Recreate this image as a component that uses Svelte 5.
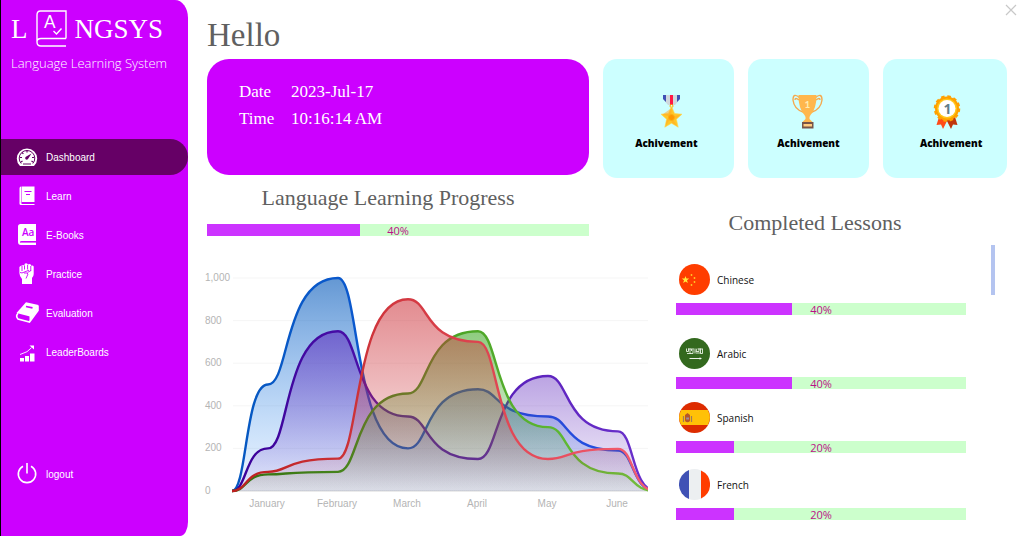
<script>
  const nav = [
    { label: 'Dashboard', icon: 'gauge' },
    { label: 'Learn', icon: 'learn' },
    { label: 'E-Books', icon: 'ebook' },
    { label: 'Practice', icon: 'fist' },
    { label: 'Evaluation', icon: 'book' },
    { label: 'LeaderBoards', icon: 'bars' }
  ];
  let active = $state('Dashboard');

  const awards = ['star', 'trophy', 'rosette'];

  const lessons = [
    { name: 'Chinese', flag: 'cn', value: 40 },
    { name: 'Arabic', flag: 'sa', value: 40 },
    { name: 'Spanish', flag: 'es', value: 20 },
    { name: 'French', flag: 'fr', value: 20 }
  ];

  const months = ['January', 'February', 'March', 'April', 'May', 'June'];
  const ticks = [0, 200, 400, 600, 800, 1000];
  const xs = [25, 61, 131, 201, 271, 341, 411, 449];
  const base = 225;
  const yOf = (v) => base - v * 0.213;

  const series = [
    { id: 'blue', values: [0, 500, 1000, 200, 478, 350, 190, 0], from: '#0558c0', to: '#1858ee', fill: '#0558b8' },
    { id: 'violet', values: [0, 200, 750, 350, 150, 540, 280, 0], from: '#3a0098', to: '#6a30cc', fill: '#5c24bc' },
    { id: 'green', values: [0, 78, 90, 458, 750, 300, 82, 0], from: '#24780c', to: '#6cc83c', fill: '#36a41c' },
    { id: 'red', values: [0, 90, 152, 900, 700, 150, 198, 0], from: '#bc2020', to: '#f45c70', fill: '#cc3038' }
  ];

  function curve(values) {
    let d = `M${xs[0]} ${yOf(values[0])}`;
    for (let i = 1; i < xs.length; i++) {
      const edge = i === 1 || i === xs.length - 1;
      const ease = edge ? [0.42, 0.36] : [0.31, 0.22];
      const dx = xs[i] - xs[i - 1];
      const y0 = yOf(values[i - 1]);
      const y1 = yOf(values[i]);
      d += `C${xs[i - 1] + dx * ease[0]} ${y0} ${xs[i - 1] + dx * ease[1]} ${y1} ${xs[i]} ${y1}`;
    }
    return d;
  }
</script>

{#snippet progress(value, label)}
  <div class="progress" role="progressbar" aria-label={label} aria-valuenow={value} aria-valuemin="0" aria-valuemax="100">
    <div class="bar" style="width: {value}%"></div>
    <span>{value}%</span>
  </div>
{/snippet}

<div class="app">
  <aside>
    <div class="logo">
      <span>L</span>
      <svg width="31" height="37" viewBox="0 0 31 37" fill="none" stroke="#fff" stroke-width="1.4">
        <path d="M30 28.500V1H4.500Q1 1 1 5V32Q1 36 5 36H30M1 32Q1 28.500 5 28.500H30" />
        <text x="8" y="18" fill="#fff" stroke="none" font-size="17" font-family="Lato">A</text>
        <path d="M17.500 21l3 3 5-5.500" />
      </svg>
      <span>NGSYS</span>
    </div>
    <p class="tagline">Language Learning System</p>

    <nav>
      {#each nav as item}
        <button class:active={active === item.label} onclick={() => (active = item.label)}>
          <svg width="24" height="24" viewBox="0 0 24 24" fill="#fff">
            {#if item.icon === 'gauge'}
              <path d="M5 21a10.200 10.200 0 1 1 14 0z" />
              <path d="M6.200 18.500a7.800 7.800 0 1 1 11.600 0" fill="none" stroke="#660066" stroke-width="1" />
              <path d="M12 5.500v2M7 7.500l1.400 1.400M5 12.500h2M17 12.500h2M6 17l1.500-1M18 17l-1.500-1M8 19h8" stroke="#660066" stroke-width="1.200" />
              <path d="M16.500 8.500l-3.200 5a1.600 1.600 0 1 1-2-2z" fill="#660066" />
            {:else if item.icon === 'learn'}
              <path d="M4.500 4.500q0-2 1.500-2v16h-1.500zM6.500 2.500h13v15.500h-13z" />
              <path d="M9.500 7.500h7M11 10.500h4" stroke="#cc00ff" stroke-width="1.200" />
              <path d="M4.500 18.200v1.500q0 1.200 1.500 1.200h13.500v-1H6.500v-1.700z" />
            {:else if item.icon === 'ebook'}
              <path d="M5.500 1H21v17H6.500q-1.500 0-1.500 1t1.500 1H21v2H6q-3 0-3-3V3.500Q3 1 5.500 1z" />
              <path d="M6 20h15" stroke="#fff" stroke-width=".8" />
              <text x="7" y="13" font-size="10" font-weight="600" font-family="Open Sans" fill="#cc00ff">Aa</text>
            {:else if item.icon === 'fist'}
              <path d="M7 3.500q1.200-1 2.300 0l.4-1.700q1.400-1.300 2.700 0l.4.900q1.300-1.500 3-.2l.3 1.300q1.800-.8 2.600.7v7.500q0 2.500-1.700 4v6H7v-5q-2.600-3-2.600-6V5q1-1.500 2.600-1.500z" />
              <path d="M7 4v5M9.500 3.500v4M12.600 3v4.500M15.800 4v5M5 10.500q2 1 4-.3l5-2M9 11q4-.5 4 1l-2 4.500M12.500 10.500l3.500-2" fill="none" stroke="#cc00ff" stroke-width=".9" />
            {:else if item.icon === 'book'}
              <path d="M11 1.200L23.500 4 15 15.500 1.500 12z" />
              <path d="M23 4.500v5L14.500 21 3 18q-2.700-3 0-5.800" fill="none" stroke="#fff" stroke-width="1.600" />
              <path d="M14.500 15v5.500L23 9V4z" />
              <path d="M11 5.500l6.500 1.400" stroke="#cc00ff" stroke-width="1.600" />
            {:else}
              <path d="M5 18h4v3.500H5zM10 16h4v5.500h-4zM15 13.500h4.500v8H15z" />
              <path d="M5 14.500l7-2.800 4.500-4" fill="none" stroke="#fff" stroke-width=".9" />
              <path d="M14.500 5.500h4.500V9.500z" />
            {/if}
          </svg>
          {item.label}
        </button>
      {/each}
    </nav>

    <button class="logout">
      <svg width="24" height="24" viewBox="0 0 24 24" fill="none" stroke="#fff" stroke-width="1.600">
        <path d="M8 4.200a8.700 8.700 0 1 0 8 0M12 1v10.500" />
      </svg>
      logout
    </button>
  </aside>

  <main>
    <header>
      <h1>Hello</h1>
      <button class="close" aria-label="Close">
        <svg width="12" height="12" viewBox="0 0 12 12" stroke="#c8c8c8" stroke-width="1.200"><path d="M1 1l10 10M11 1L1 11" /></svg>
      </button>
    </header>

    <section class="top">
      <dl class="clock">
        <dt>Date</dt><dd>2023-Jul-17</dd>
        <dt>Time</dt><dd>10:16:14 AM</dd>
      </dl>
      <div class="awards">
        {#each awards as award}
          <article class={award}>
            <svg width="48" height="36" viewBox="0 0 48 36">
              {#if award === 'star'}
                <path d="M21 1h17v4l-5 6h-7l-5-6z" fill="#cfd8dc" />
                <path d="M21 1h3v7l-3-3zM38 1h-3v7l3-3z" fill="#3f51b5" />
                <path d="M28 1h3v10h-3z" fill="#ff1744" />
                <circle cx="29.500" cy="12" r="1.500" fill="none" stroke="#ffb300" />
                <path d="M29.500 12.500l3.100 7 7.400.7-5.600 5 1.800 8-6.700-4-6.700 4 1.800-8-5.600-5 7.400-.7z" fill="#ffc727" stroke="#ffd54f" stroke-width=".6" />
                <path d="M29.500 14v9l-9-2.500zM29.500 23l9-2.500-4.500 4zM29.500 23l5.500 9-5.500-3.500zM29.500 23l-6 9 1.500-7z" fill="#ffa726" opacity=".5" />
                <circle cx="29.500" cy="23.500" r="3" fill="#ff9800" stroke="#fbb016" />
              {:else if award === 'trophy'}
                <path d="M16 4Q9-2 9 6q1 9 10 12M15 6q-4-3-4 0M31 4q7-6 7 2-1 9-10 12M32 6q4-3 4 0" fill="none" stroke="#f5a94e" stroke-width="1.400" />
                <path d="M14.500 1h18q0 14-6 20-1.500 2-1 4 1 1 3 3h-10q2-2 3-3 .5-2-1-4-6-6-6-20z" fill="#ffb74d" />
                <path d="M18 28h11.500v6.500H18z" fill="#795548" /><path d="M19.500 30h8.500v2.500h-8.500z" fill="#ffcc80" />
                <text x="20.500" y="14" font-size="10" font-weight="700" font-family="Lato" fill="#ffecb3">1</text>
              {:else}
                <path d="M12 23l-2.500 8 4.500-.5 2 4.500 4.500-9z" fill="#ff4b18" /><path d="M28 23l2.500 8-4.500-.5-2 4.500-4.500-9z" fill="#bf360c" />
                <circle cx="20" cy="14.500" r="12" fill="#ffa000" stroke="#ffa000" stroke-width="2.500" stroke-dasharray="3.500 2.780" />
                <circle cx="20" cy="14.500" r="10" fill="#ffc61a" /><circle cx="20" cy="14.500" r="8.500" fill="#fff" />
                <text x="16.500" y="20" font-size="14" font-weight="700" font-family="Open Sans" fill="#607d8b">1</text>
              {/if}
            </svg>
            <h3>Achivement</h3>
          </article>
        {/each}
      </div>
    </section>

    <section class="bottom">
      <div class="learning">
        <div class="overall">
          <h2>Language Learning Progress</h2>
          {@render progress(40, 'Language Learning Progress')}
        </div>
        <svg class="chart" viewBox="0 0 441 245" role="img" aria-label="Monthly learning activity">
          <defs>
            {#each series as s}
              <linearGradient id="{s.id}-line" gradientUnits="userSpaceOnUse" x1="26" x2="441" y1="0" y2="0">
                <stop stop-color={s.from} /><stop offset="1" stop-color={s.to} />
              </linearGradient>
              <linearGradient id="{s.id}-area" x1="0" x2="0" y1="0" y2="1">
                <stop stop-color={s.fill} stop-opacity=".56" /><stop offset="1" stop-color={s.fill} stop-opacity=".05" />
              </linearGradient>
            {/each}
            <linearGradient id="blue-fade" x1="0" x2="0" y1="0" y2="1">
              <stop stop-color="#0558b8" stop-opacity=".62" /><stop offset="1" stop-color="#3f98ff" stop-opacity=".1" />
            </linearGradient>
            <clipPath id="plot"><rect x="24" y="8" width="417" height="219" /></clipPath>
          </defs>
          {#each ticks as t}
            <path d="M26 {yOf(t)}H441" stroke={t ? '#f5f5f5' : '#d8d8d8'} />
            <text x="-2" y={yOf(t) + 3}>{t.toLocaleString('en-US')}</text>
          {/each}
          <g clip-path="url(#plot)">
            {#each series as s}
              <path d="{curve(s.values)}V{base}H25Z" fill="url(#{s.id === 'blue' ? 'blue-fade' : s.id + '-area'})" />
              <path d={curve(s.values)} fill="none" stroke="url(#{s.id}-line)" stroke-width="2.400" />
            {/each}
          </g>
          {#each months as m, i}
            <text x={60 + i * 70} y="241" text-anchor="middle">{m}</text>
          {/each}
        </svg>
      </div>

      <div class="completed">
        <h2>Completed Lessons</h2>
        <div class="scroller">
          <ul>
            {#each lessons as lesson}
              <li>
                <div class="lang">
                  <svg width="31" height="31" viewBox="0 0 31 31">
                    {#if lesson.flag === 'cn'}
                      <circle cx="15.500" cy="15.500" r="15.500" fill="#ff3d00" />
                      <path d="M6.500 12l.9 2.600h2.800l-2.200 1.700.8 2.700-2.300-1.600L4.200 19l.8-2.700-2.200-1.700h2.800z" fill="#ffeb3b" />
                      <g fill="#ffca28"><circle cx="12.500" cy="11" r=".9" /><circle cx="15.500" cy="14" r=".9" /><circle cx="15.500" cy="18" r=".9" /><circle cx="12.500" cy="21" r=".9" /></g>
                    {:else if lesson.flag === 'sa'}
                      <circle cx="15.500" cy="15.500" r="15.500" fill="#33691e" />
                      <path d="M7.500 10.500v3h2v-3M11 10.500v5h3v-4M12.500 11v2M16 10.500v5M18 10.500l-1 3h3v-3M21.500 10.500v5h2v-5M8 15.500h4M9 11h6M17 15h5M19 11h4" fill="none" stroke="#e8f0e4" stroke-width=".9" />
                      <path d="M10.500 20.500h12M21 19.500v2" stroke="#fff" stroke-width=".9" />
                    {:else if lesson.flag === 'es'}
                      <circle cx="15.500" cy="15.500" r="15.500" fill="#dd2c00" />
                      <path d="M2.200 8h26.600a15.500 15.500 0 0 1 0 15H2.200a15.500 15.500 0 0 1 0-15z" fill="#ffc107" />
                      <path d="M4.500 14v6M12.500 14v6" stroke="#a1785a" stroke-width="1.200" />
                      <path d="M6 13l2.500-2 2.500 2v6q-2.500 2.500-5 0z" fill="#b5562a" /><path d="M7.200 15.500h2.800v2H7.200z" fill="#9b8ca0" />
                    {:else}
                      <circle cx="15.500" cy="15.500" r="15.500" fill="#eceff1" />
                      <path d="M10 1a15.500 15.500 0 0 0 0 29z" fill="#3f51b5" /><path d="M22 1.400a15.500 15.500 0 0 1 0 28.200z" fill="#ff3d00" />
                    {/if}
                  </svg>
                  {lesson.name}
                </div>
                {@render progress(lesson.value, lesson.name)}
              </li>
            {/each}
          </ul>
          <div class="thumb"></div>
        </div>
      </div>
    </section>
  </main>
</div>

<style>
  :global(body) { background: #fff; }
  .app { display: flex; min-height: 100vh; font-family: "Open Sans", sans-serif; }
  button { border: 0; background: none; color: inherit; cursor: pointer; }
  svg { flex: none; display: block; }
  h1, h2, h3, p, ul, dl, dd { margin: 0; padding: 0; }

  aside {
    box-sizing: border-box;
    width: 188px;
    flex: none;
    background: #cc00ff;
    border-left: 1px solid #000;
    border-radius: 0 13px 8px 0 / 0 18px 14px 0;
    color: #fff;
  }
  .logo {
    display: flex;
    align-items: center;
    gap: 8px;
    padding: 10px 0 0 10px;
    font: 27px/36px "Liberation Serif", serif;
  }
  .tagline { padding: 6px 0 0 10px; font-size: 13px; font-weight: 300; line-height: 20px; white-space: nowrap; }
  nav { display: flex; flex-direction: column; gap: 3px; padding-top: 66px; }
  nav button, .logout {
    display: flex;
    align-items: center;
    gap: 7px;
    width: 100%;
    height: 36px;
    padding: 0 0 0 14px;
    font: 10px "Liberation Sans", sans-serif;
    text-align: left;
  }
  nav .active { background: #660066; border-radius: 0 18px 18px 0; }
  .logout { margin-top: 86px; }

  main { flex: 1; min-width: 0; padding: 0 15px 0 19px; }
  header { display: flex; justify-content: space-between; align-items: flex-start; height: 59px; }
  h1, h2 { font-family: "Liberation Serif", serif; font-weight: 400; color: #606060; }
  h1 { padding-top: 16px; font-size: 33px; line-height: 38px; }
  h2 { font-size: 22px; line-height: 24px; text-align: center; white-space: nowrap; }
  .close { margin: 4px -10px 0 0; padding: 0; }

  .top { display: grid; grid-template-columns: 382fr 404fr; gap: 14px; align-items: start; }
  .clock {
    box-sizing: border-box;
    display: grid;
    grid-template-columns: 52px 1fr;
    align-content: start;
    min-height: 116px;
    padding: 19px 32px;
    border-radius: 22px;
    background: #cc00ff;
    color: #fff;
    font: 17px/27px "Liberation Serif", serif;
  }
  .awards { display: grid; grid-template-columns: 131fr 122fr 124fr; gap: 14px; }
  article {
    display: flex;
    box-sizing: border-box;
    flex-direction: column;
    align-items: center;
    min-height: 119px;
    padding-top: 35px;
    border-radius: 14px;
    background: #ccffff;
    color: #000;
  }
  .star { padding-right: 4px; }
  .rosette { padding-left: 12px; }
  h3 { margin-top: 5px; font-size: 10px; font-weight: 800; line-height: 16px; }

  .bottom { display: grid; grid-template-columns: 441fr 331fr; gap: 28px; }
  .learning { padding-top: 8px; }
  .overall { display: grid; gap: 14px; padding-right: 59px; }
  .overall h2 { padding-right: 20px; }
  .progress { position: relative; height: 12px; background: #ccffcc; color: #bb1188; }
  .bar { height: 100%; background: #cc33ff; }
  .progress span { position: absolute; inset: 0; text-align: center; font-size: 11px; font-weight: 500; line-height: 13px; }
  .chart { width: 100%; margin-top: 30px; overflow: visible; }
  .chart text { font: 10px "Liberation Sans", sans-serif; fill: #b4b4b4; }

  .completed { padding-top: 33px; }
  .completed h2 { padding-right: 53px; }
  .scroller { display: flex; justify-content: space-between; padding: 10px 12px 0 0; }
  ul { width: 290px; padding-top: 19px; list-style: none; }
  li + li { margin-top: 23px; }
  li:nth-child(3) { margin-top: 13px; }
  li:nth-child(4) { margin-top: 16px; }
  .lang { display: flex; align-items: center; gap: 7px; padding: 0 0 8px 3px; font-size: 10px; line-height: 16px; color: #111; }
  .thumb { width: 4px; height: 50px; background: #b4c4f0; }
</style>
